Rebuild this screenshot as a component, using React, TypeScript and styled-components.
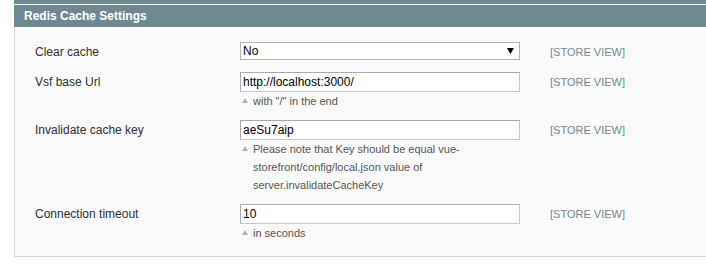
import styled, { createGlobalStyle } from 'styled-components';

const GlobalStyle = createGlobalStyle`
  html, body {
    margin: 0;
    padding: 0;
    background: #ffffff;
    overflow: hidden;
  }
  body {
    font-family: "Liberation Sans", Arial, sans-serif;
    font-size: 12px;
    color: #2f2f2f;
  }
`;

const Page = styled.div`
  margin-left: 14px;
`;

const PrevBar = styled.div`
  height: 4px;
  background: #6f8992;
  border-bottom: 1px solid #ffffff;
`;

const Head = styled.div`
  height: 22px;
  background: #6f8992;
  color: #ffffff;
  font-weight: bold;
  font-size: 12px;
  line-height: 22px;
  padding-left: 10px;
`;

const Fieldset = styled.div`
  background: #fafafa;
  border-left: 1px solid #d6d6d6;
  border-bottom: 1px solid #d6d6d6;
  padding: 15px 20px 14px;
  display: flex;
  flex-direction: column;
  gap: 10px;
`;

const Row = styled.div`
  display: grid;
  grid-template-columns: 205px 280px auto;
  align-items: start;
  min-height: 20px;
`;

const Label = styled.div`
  padding-top: 3px;
  line-height: 14px;
  color: #2f2f2f;
`;

const Value = styled.div`
  display: flex;
  flex-direction: column;
`;

const TextInput = styled.input`
  box-sizing: border-box;
  width: 280px;
  height: 20px;
  margin: 0;
  padding: 0 2px;
  border: 1px solid #c8c8c8;
  border-color: #aaaaaa #c8c8c8 #c8c8c8 #aaaaaa;
  background: #ffffff;
  font-family: "Liberation Sans", Arial, sans-serif;
  font-size: 12px;
  color: #000000;
  outline: none;
`;

const SelectBox = styled.div`
  box-sizing: border-box;
  width: 280px;
  height: 18px;
  padding: 0 5px 0 2px;
  border: 1px solid #b4b4b4;
  background: #ffffff;
  display: flex;
  align-items: center;
  justify-content: space-between;
  font-size: 12px;
  color: #000000;
`;

const Arrow = styled.svg`
  width: 7px;
  height: 6px;
  display: block;
`;

const Note = styled.div`
  display: flex;
  font-size: 11px;
  line-height: 18px;
  color: #555555;
`;

const Bullet = styled.span`
  flex: 0 0 13px;
  display: flex;
  padding-top: 6px;
  box-sizing: border-box;

  &::before {
    content: '';
    display: block;
    margin-left: 2px;
    width: 0;
    height: 0;
    border-left: 3px solid transparent;
    border-right: 3px solid transparent;
    border-bottom: 5px solid #b3b3b3;
  }
`;

const Scope = styled.div`
  padding: 3px 0 0 30px;
  line-height: 14px;
  font-size: 11px;
  color: #6f8992;
`;

type Field = {
  label: string;
  value: string;
  select?: boolean;
  note?: string;
};

const fields: Field[] = [
  { label: 'Clear cache', value: 'No', select: true },
  { label: 'Vsf base Url', value: 'http://localhost:3000/', note: 'with "/" in the end' },
  {
    label: 'Invalidate cache key',
    value: 'aeSu7aip',
    note: 'Please note that Key should be equal vue-storefront/config/local.json value of server.invalidateCacheKey',
  },
  { label: 'Connection timeout', value: '10', note: 'in seconds' },
];

const App = () => {
  return (
    <>
      <GlobalStyle />
      <Page>
        <PrevBar />
        <Head>Redis Cache Settings</Head>
        <Fieldset>
          {fields.map((f) => (
            <Row key={f.label}>
              <Label>{f.label}</Label>
              <Value>
                {f.select ? (
                  <SelectBox>
                    <span>{f.value}</span>
                    <Arrow viewBox="0 0 7 6">
                      <path d="M0 0H7L3.5 6Z" fill="#000" />
                    </Arrow>
                  </SelectBox>
                ) : (
                  <TextInput type="text" defaultValue={f.value} />
                )}
                {f.note && (
                  <Note>
                    <Bullet />
                    <span>{f.note}</span>
                  </Note>
                )}
              </Value>
              <Scope>[STORE VIEW]</Scope>
            </Row>
          ))}
        </Fieldset>
      </Page>
    </>
  );
};

export default App;
